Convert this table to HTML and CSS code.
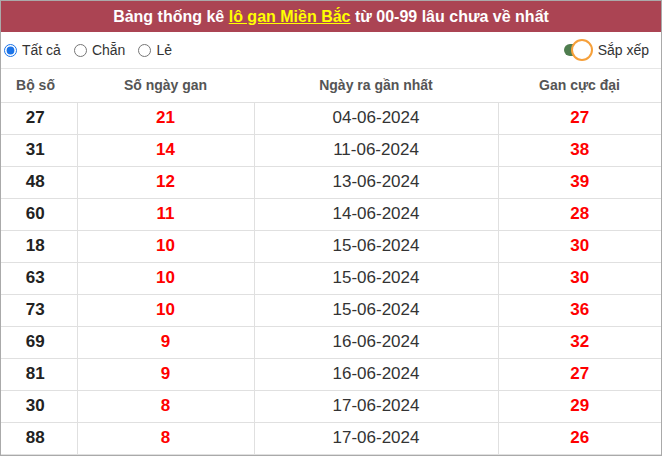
FILE: index.html
```html
<!DOCTYPE html>
<html lang="vi">
<head>
<meta charset="utf-8">
<link rel="stylesheet" href="styles.css">
</head>
<body>
<div class="box">
  <div class="title">Bảng thống kê <a class="hl" href="#">lô gan Miền Bắc</a> từ 00-99 lâu chưa về nhất</div>
  <div class="opts">
    <div class="radios">
      <label class="opt"><input type="radio" name="f" checked>Tất cả</label>
      <label class="opt"><input type="radio" name="f">Chẵn</label>
      <label class="opt"><input type="radio" name="f">Lẻ</label>
    </div>
    <div class="sort">
      <span class="toggle"><span class="track"></span><span class="knob"></span></span>
      <span>Sắp xếp</span>
    </div>
  </div>
  <table class="tbl">
    <thead>
      <tr><th class="c1">Bộ số</th><th class="c2">Số ngày gan</th><th class="c3">Ngày ra gần nhất</th><th class="c4">Gan cực đại</th></tr>
    </thead>
    <tbody>
      <tr><td class="num">27</td><td class="red">21</td><td class="date">04-06-2024</td><td class="red">27</td></tr>
      <tr><td class="num">31</td><td class="red">14</td><td class="date">11-06-2024</td><td class="red">38</td></tr>
      <tr><td class="num">48</td><td class="red">12</td><td class="date">13-06-2024</td><td class="red">39</td></tr>
      <tr><td class="num">60</td><td class="red">11</td><td class="date">14-06-2024</td><td class="red">28</td></tr>
      <tr><td class="num">18</td><td class="red">10</td><td class="date">15-06-2024</td><td class="red">30</td></tr>
      <tr><td class="num">63</td><td class="red">10</td><td class="date">15-06-2024</td><td class="red">30</td></tr>
      <tr><td class="num">73</td><td class="red">10</td><td class="date">15-06-2024</td><td class="red">36</td></tr>
      <tr><td class="num">69</td><td class="red">9</td><td class="date">16-06-2024</td><td class="red">32</td></tr>
      <tr><td class="num">81</td><td class="red">9</td><td class="date">16-06-2024</td><td class="red">27</td></tr>
      <tr><td class="num">30</td><td class="red">8</td><td class="date">17-06-2024</td><td class="red">29</td></tr>
      <tr><td class="num">88</td><td class="red">8</td><td class="date">17-06-2024</td><td class="red">26</td></tr>
    </tbody>
  </table>
</div>
</body>
</html>
```
FILE: styles.css
```css
html, body { margin: 0; padding: 0; background: #fff; }
body { font-family: "Liberation Sans", Arial, sans-serif; color: #333; }
.box {
  width: 660px;
  height: 454px;
  border: 1px solid #aaa;
  overflow: hidden;
}
.title {
  height: 31px;
  line-height: 31px;
  background: #ab4453;
  color: #fff;
  font-weight: bold;
  font-size: 16px;
  text-align: center;
}
.hl { color: #ff0; text-decoration: underline; }
.opts {
  height: 36px;
  display: flex;
  align-items: center;
  justify-content: space-between;
  border-bottom: 1px solid #e6e6e6;
  font-size: 14px;
  color: #333;
}
.radios { display: flex; gap: 13px; padding-left: 3px; }
.opt { display: flex; align-items: center; }
.opt input { margin: 0 5px 0 0; width: 13px; height: 13px; accent-color: #1a73e8; }
.sort { display: flex; align-items: center; gap: 4px; padding-right: 12px; }
.toggle { position: relative; width: 32px; height: 22px; display: inline-block; }
.track {
  position: absolute; left: 2px; top: 5px;
  width: 24px; height: 12px; border-radius: 6px; background: #4f7d4f;
}
.knob {
  position: absolute; left: 9px; top: 0;
  width: 18px; height: 18px; border-radius: 50%;
  background: #fff; border: 2px solid #f6a03a;
}
.tbl { width: 100%; border-collapse: collapse; table-layout: fixed; }
.tbl th, .tbl td { box-sizing: border-box; }
.tbl th {
  height: 33px;
  font-size: 14px; font-weight: bold; color: #555;
  text-align: center; padding: 0;
  border-bottom: 1px solid #e0e0e0;
}
.c1 { width: 76px; }
.c2 { width: 177px; }
.c3 { width: 244px; }
.tbl td {
  height: 32px;
  padding: 0;
  text-align: center;
  font-size: 17px;
  border-bottom: 1px solid #e0e0e0;
  border-left: 1px solid #e0e0e0;
}
.tbl th.c1, .tbl td:first-child { padding-right: 7px; }
.tbl td:first-child { border-left: none; }
.num { font-weight: bold; color: #222; }
.red { font-weight: bold; color: #f00; }
.date { color: #333; }
```
